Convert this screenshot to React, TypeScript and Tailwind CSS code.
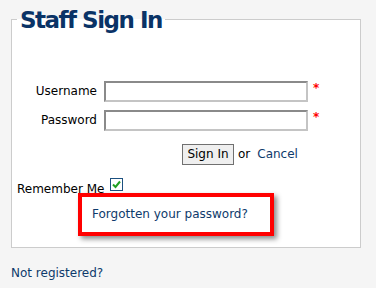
import React from "react";

function Field({ label, type }: { label: string; type: string }) {
  return (
    <div className="flex items-start">
      <label className="w-[85px] shrink-0 h-[21px] flex items-center justify-end">{label}</label>
      <input
        type={type}
        className="ml-[7px] shrink-0 w-[204px] h-[21px] border-2 border-t-[#8a8a8a] border-l-[#8a8a8a] border-b-[#c4c4c4] border-r-[#c4c4c4] bg-white outline-none"
      />
      <span className="ml-[5px] text-[#ff0000] font-bold leading-[15px]">*</span>
    </div>
  );
}

export default function App() {
  const font = { fontFamily: '"DejaVu Sans", Verdana, sans-serif' };
  return (
    <div className="w-[376px] h-[288px] bg-[#f5f5f5] text-[12px] leading-[15px] text-black overflow-hidden" style={font}>
      <div className="pt-[2px] pl-[11px]">
        <fieldset className="w-[350px] border border-[#cccccc] bg-white m-0 p-0 pb-[11px]">
          <legend className="ml-[5px] px-[3px] pt-[2px] text-[23px] leading-[32px] font-bold tracking-[-1.5px] text-[#0a3366]">
            Staff Sign In
          </legend>
          <div className="pt-[45px] flex flex-col">
            <div className="flex flex-col gap-[8px]">
              <Field label="Username" type="text" />
              <Field label="Password" type="password" />
            </div>
            <div className="mt-[13px] pl-[170px] flex items-center">
              <button className="w-[52px] h-[21px] border border-[#707070] bg-[#efefef] text-black text-[12px] leading-[15px] flex items-center justify-center">
                Sign In
              </button>
              <span className="ml-[4px]">or</span>
              <span className="ml-[7px] text-[#0e3a6b]">Cancel</span>
            </div>
            <div className="mt-[13px] pl-[5px] flex items-start h-[18px]">
              <span className="mt-[4px]">Remember Me</span>
              <span className="ml-[6px] w-[13px] h-[13px] border border-[#1c5180] bg-white flex items-center justify-center">
                <svg width="9" height="9" viewBox="0 0 9 9">
                  <path d="M1 4.5 L3.5 7 L8 1.5" fill="none" stroke="#22a022" strokeWidth="2" />
                </svg>
              </span>
            </div>
            <div className="-mt-[3px] ml-[66px] w-[196px] h-[43px] border-4 border-[#ff0000] shadow-[3px_3px_5px_rgba(0,0,0,0.45)] flex items-center pl-[10px]">
              <span className="text-[#0e3a6b]">Forgotten your password?</span>
            </div>
          </div>
        </fieldset>
        <div className="mt-[18px] text-[#0e3a6b]">Not registered?</div>
      </div>
    </div>
  );
}
